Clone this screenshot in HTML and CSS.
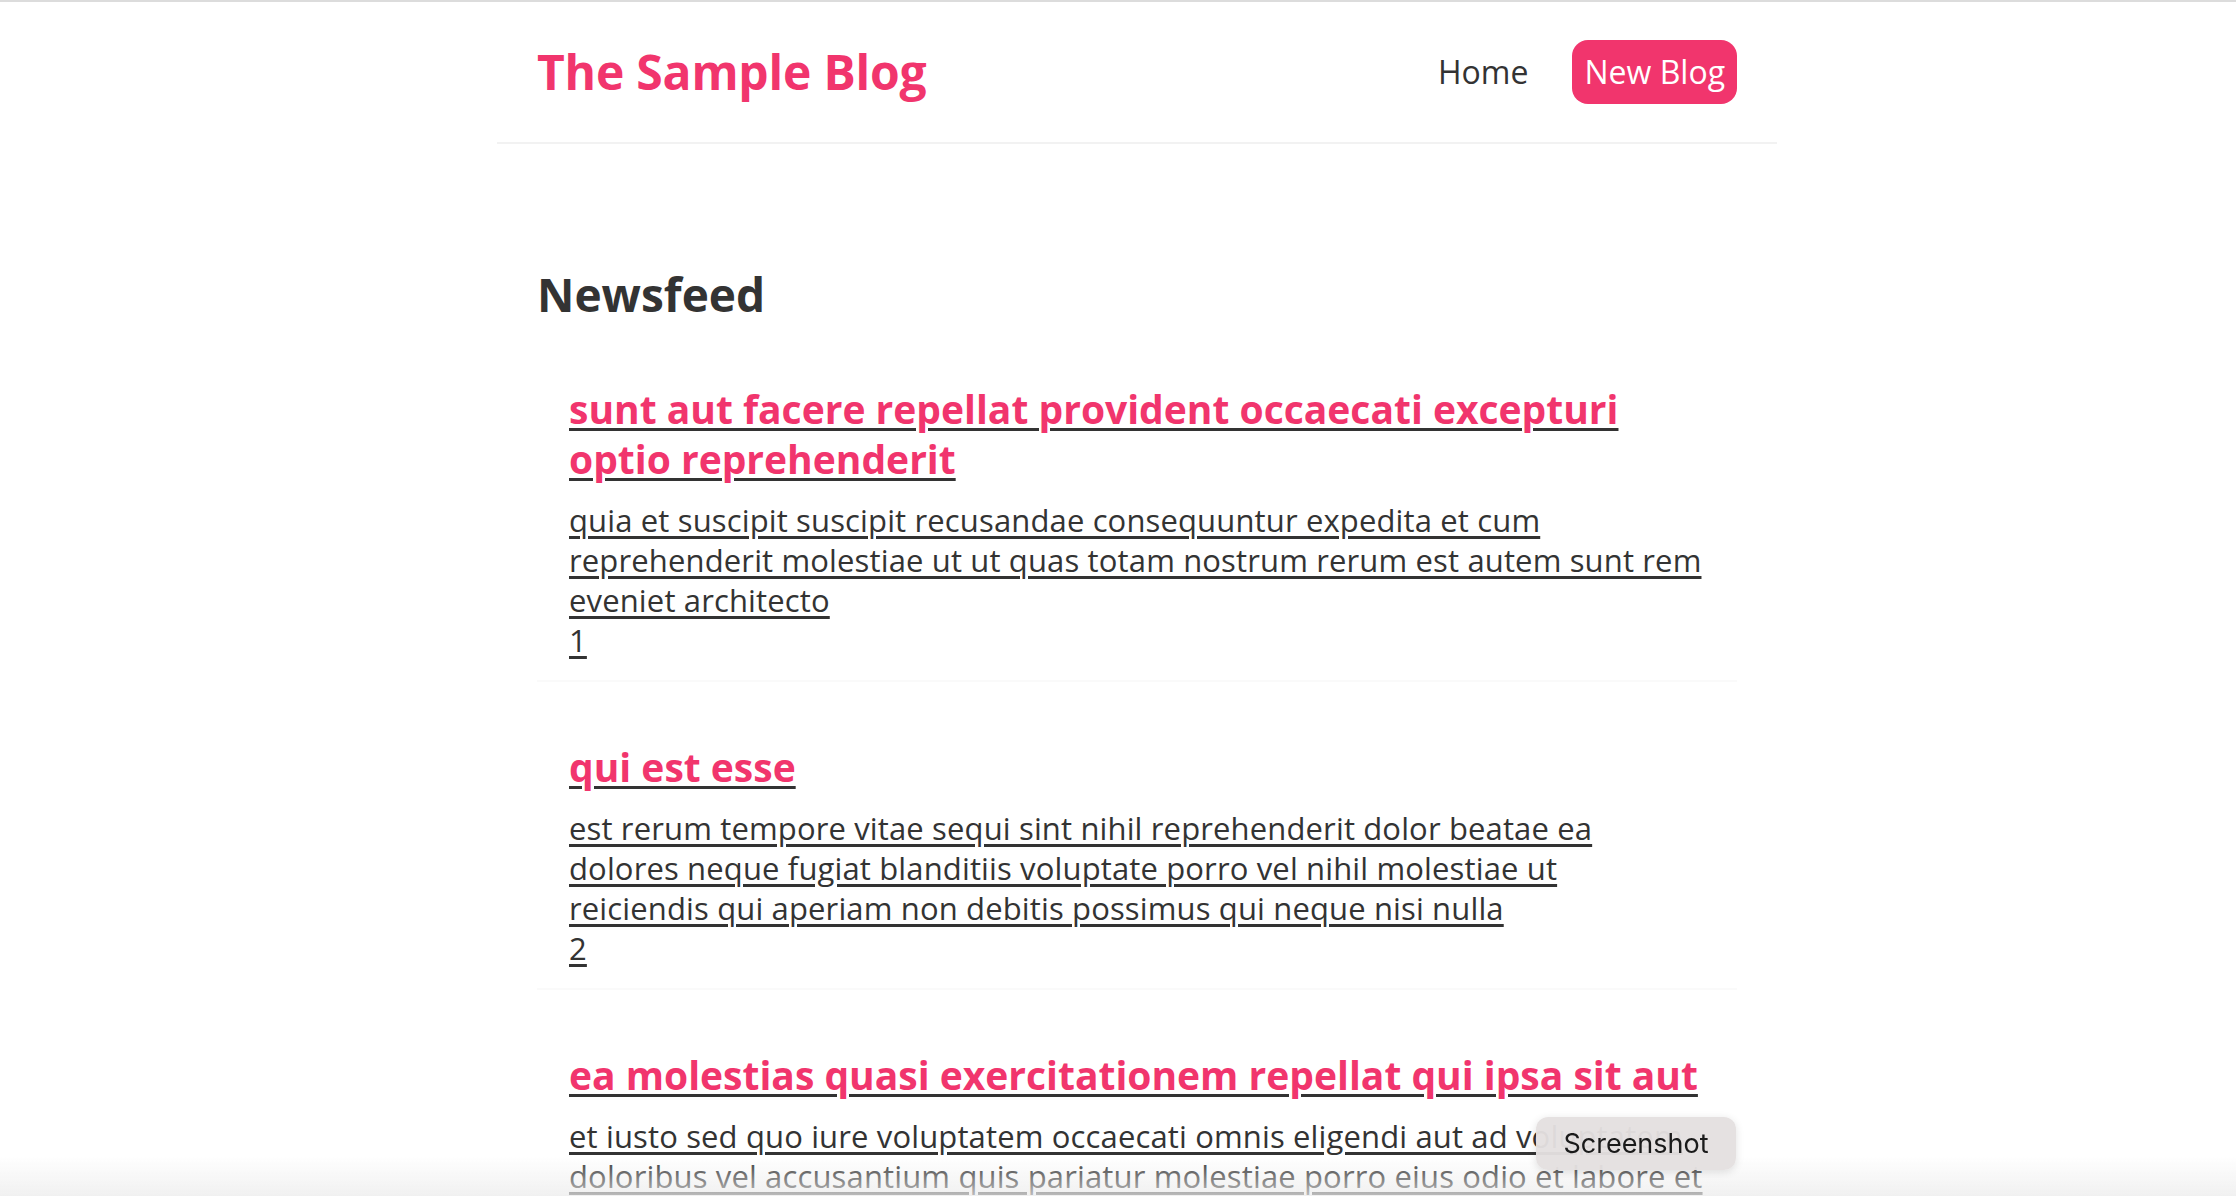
FILE: index.html
```html
<!DOCTYPE html>
<html lang="en">
<head>
<meta charset="utf-8">
<title>The Sample Blog</title>
<link rel="stylesheet" href="styles.css">
</head>
<body>
<div class="app">
  <nav class="navbar">
    <h1 class="brand">The Sample Blog</h1>
    <div class="links">
      <a href="#" class="link">Home</a>
      <a href="#" class="link link-primary">New Blog</a>
    </div>
  </nav>
  <main class="content">
    <h2 class="page-title">Newsfeed</h2>
    <div class="blog-list">
      <a href="#" class="blog-preview">
        <h2 class="blog-title">sunt aut facere repellat provident occaecati excepturi optio reprehenderit</h2>
        <p class="blog-body">quia et suscipit suscipit recusandae consequuntur expedita et cum reprehenderit molestiae ut ut quas totam nostrum rerum est autem sunt rem eveniet architecto</p>
        <p class="blog-id">1</p>
      </a>
      <a href="#" class="blog-preview">
        <h2 class="blog-title">qui est esse</h2>
        <p class="blog-body">est rerum tempore vitae sequi sint nihil reprehenderit dolor beatae ea dolores neque fugiat blanditiis voluptate porro vel nihil molestiae ut reiciendis qui aperiam non debitis possimus qui neque nisi nulla</p>
        <p class="blog-id">2</p>
      </a>
      <a href="#" class="blog-preview">
        <h2 class="blog-title">ea molestias quasi exercitationem repellat qui ipsa sit aut</h2>
        <p class="blog-body">et iusto sed quo iure voluptatem occaecati omnis eligendi aut ad voluptatem doloribus vel accusantium quis pariatur molestiae porro eius odio et labore et velit aut</p>
        <p class="blog-id">3</p>
      </a>
    </div>
  </main>
</div>
<div class="shot-fade"></div>
<div class="shot-tip">Screenshot</div>
</body>
</html>
```
FILE: styles.css
```css
* {
  margin: 0;
  font-family: "Open Sans", "Noto Sans", sans-serif;
  color: #333;
}

html, body {
  background: #fff;
}

body {
  margin: 0;
  padding-left: 38px;
  border-top: 2px solid #dcdcdc;
  overflow: hidden;
}

.navbar {
  display: flex;
  align-items: center;
  max-width: 1200px;
  margin: 0 auto;
  padding: 38px 40px 38px;
  border-bottom: 2px solid #f2f2f2;
}

.brand {
  color: #f1356d;
  font-size: 48px;
  font-weight: 700;
  line-height: 62px;
  letter-spacing: -0.2px;
}

.links {
  margin-left: auto;
  display: flex;
  align-items: center;
}

.link {
  margin-left: 32px;
  padding: 12px;
  font-size: 32px;
  line-height: 40px;
  font-weight: 400;
  text-decoration: none;
  color: #333;
}

.link-primary {
  color: #fff;
  background: #f1356d;
  border-radius: 16px;
}

.content {
  max-width: 1200px;
  margin: 80px auto;
  padding: 40px;
}

.page-title {
  font-size: 46px;
  line-height: 60px;
  font-weight: 700;
  color: #333;
}

.blog-preview {
  display: block;
  padding: 20px 32px;
  margin: 40px 0;
  border-bottom: 2px solid #fafafa;
  color: #333;
  text-decoration: underline;
  text-decoration-thickness: 3px;
  text-underline-offset: 4px;
}

.blog-title {
  font-size: 39px;
  line-height: 50px;
  font-weight: 700;
  color: #f1356d;
  margin-bottom: 16px;
}

.blog-body,
.blog-id {
  font-size: 31px;
  line-height: 40px;
  font-weight: 400;
  letter-spacing: 0.14px;
}

.shot-fade {
  position: fixed;
  left: 0;
  right: 0;
  bottom: 0;
  height: 40px;
  background: linear-gradient(to bottom, rgba(236, 236, 236, 0), rgba(236, 236, 236, 0.75));
  pointer-events: none;
}

.shot-tip {
  position: fixed;
  left: 1536px;
  top: 1117px;
  width: 200px;
  height: 53px;
  box-sizing: border-box;
  display: flex;
  align-items: center;
  justify-content: center;
  background: rgba(228, 224, 224, 0.96);
  border-radius: 12px;
  box-shadow: 0 2px 8px rgba(0, 0, 0, 0.12);
  font-family: "Inter", "Liberation Sans", sans-serif;
  font-size: 27px;
  color: #1a1a1a;
}
```
